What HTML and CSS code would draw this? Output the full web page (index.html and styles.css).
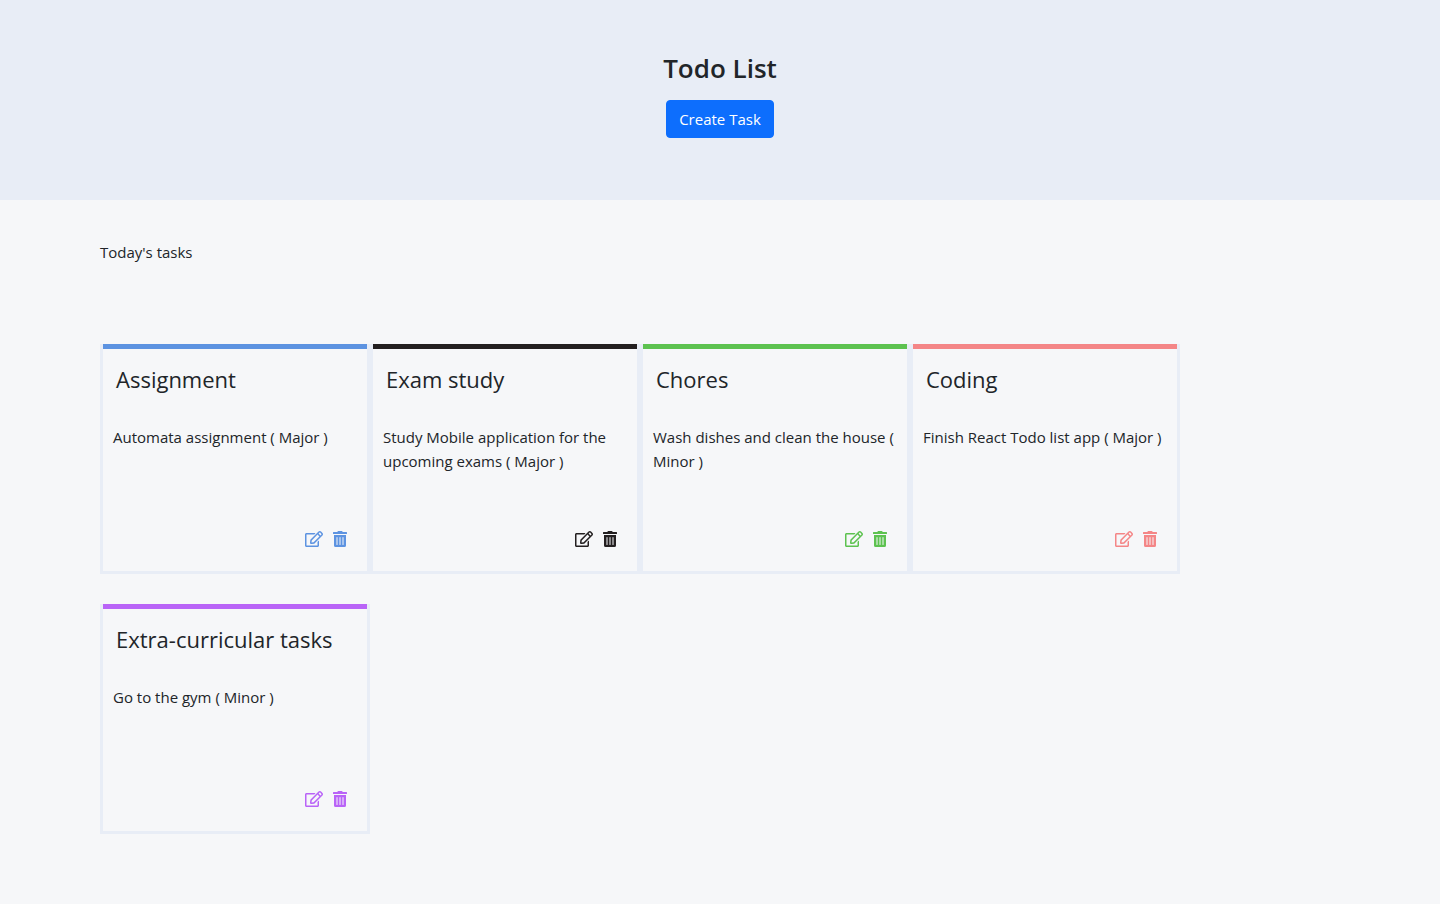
FILE: index.html
```
<!DOCTYPE html>
<html lang="en">
<head>
<meta charset="utf-8">
<meta name="viewport" content="width=device-width, initial-scale=1">
<title>Todo List</title>
<link rel="stylesheet" href="styles.css">
</head>
<body>
<svg class="sprite" aria-hidden="true">
  <symbol id="edit" viewBox="0 0 576 512"><path d="M402.3 344.9l32-32c5-5 13.7-1.5 13.7 5.7V464c0 26.5-21.5 48-48 48H48c-26.5 0-48-21.5-48-48V112c0-26.5 21.5-48 48-48h273.5c7.1 0 10.7 8.6 5.7 13.7l-32 32c-1.5 1.5-3.5 2.3-5.7 2.3H48v352h352V350.5c0-2.1.8-4.1 2.3-5.6zm156.6-201.8L296.3 405.7l-90.4 10c-26.2 2.9-48.5-19.2-45.6-45.6l10-90.4L432.9 17.1c22.9-22.9 59.9-22.9 82.7 0l43.2 43.2c22.9 22.9 22.9 60 .1 82.8zM460.1 174L402 115.9 216.2 301.8l-7.3 65.3 65.3-7.3L460.1 174zm64.8-79.7l-43.2-43.2c-4.1-4.1-10.8-4.1-14.8 0L436 82l58.1 58.1 30.9-30.9c4-4.2 4-10.8-.1-14.9z"/></symbol>
  <symbol id="trash" viewBox="0 0 448 512"><path d="M32 464a48 48 0 0 0 48 48h288a48 48 0 0 0 48-48V128H32zm272-256a16 16 0 0 1 32 0v224a16 16 0 0 1-32 0zm-96 0a16 16 0 0 1 32 0v224a16 16 0 0 1-32 0zm-96 0a16 16 0 0 1 32 0v224a16 16 0 0 1-32 0zM432 32H312l-9.4-18.7A24 24 0 0 0 281.1 0H166.8a23.7 23.7 0 0 0-21.4 13.3L136 32H16A16 16 0 0 0 0 48v32a16 16 0 0 0 16 16h416a16 16 0 0 0 16-16V48a16 16 0 0 0-16-16z"/></symbol>
</svg>
<header class="header">
  <h1 class="title">Todo List</h1>
  <button class="create" type="button">Create Task</button>
</header>
<main class="main">
  <p class="today">Today's tasks</p>
  <div class="tasks">
    <article class="card blue">
      <h2 class="name">Assignment</h2>
      <p class="text">Automata assignment ( Major )</p>
      <div class="actions">
        <button class="action" type="button" aria-label="Edit"><svg class="edit"><use href="#edit"/></svg></button>
        <button class="action" type="button" aria-label="Delete"><svg class="trash"><use href="#trash"/></svg></button>
      </div>
    </article>
    <article class="card black">
      <h2 class="name">Exam study</h2>
      <p class="text">Study Mobile application for the upcoming exams ( Major )</p>
      <div class="actions">
        <button class="action" type="button" aria-label="Edit"><svg class="edit"><use href="#edit"/></svg></button>
        <button class="action" type="button" aria-label="Delete"><svg class="trash"><use href="#trash"/></svg></button>
      </div>
    </article>
    <article class="card green">
      <h2 class="name">Chores</h2>
      <p class="text">Wash dishes and clean the house ( Minor )</p>
      <div class="actions">
        <button class="action" type="button" aria-label="Edit"><svg class="edit"><use href="#edit"/></svg></button>
        <button class="action" type="button" aria-label="Delete"><svg class="trash"><use href="#trash"/></svg></button>
      </div>
    </article>
    <article class="card red">
      <h2 class="name">Coding</h2>
      <p class="text">Finish React Todo list app ( Major )</p>
      <div class="actions">
        <button class="action" type="button" aria-label="Edit"><svg class="edit"><use href="#edit"/></svg></button>
        <button class="action" type="button" aria-label="Delete"><svg class="trash"><use href="#trash"/></svg></button>
      </div>
    </article>
    <article class="card purple">
      <h2 class="name">Extra-curricular tasks</h2>
      <p class="text">Go to the gym ( Minor )</p>
      <div class="actions">
        <button class="action" type="button" aria-label="Edit"><svg class="edit"><use href="#edit"/></svg></button>
        <button class="action" type="button" aria-label="Delete"><svg class="trash"><use href="#trash"/></svg></button>
      </div>
    </article>
  </div>
</main>
</body>
</html>
```
FILE: styles.css
```
* { box-sizing: border-box; }
body {
  margin: 0;
  background: #f6f7f9;
  color: #212529;
  font: 15px/24px "Segoe UI", "Open Sans", "Noto Sans", sans-serif;
}
h1, h2, p { margin: 0; }
.sprite { display: none; }
.header {
  display: flex;
  flex-direction: column;
  align-items: center;
  gap: 14px;
  min-height: 200px;
  padding: 50px 16px;
  background: #e8edf6;
}
.title { font-size: 26px; line-height: 36px; font-weight: 600; }
.create {
  padding: 6px 12px;
  border: 1px solid #0d6efd;
  border-radius: 4px;
  background: #0d6efd;
  color: #fff;
  font: inherit;
}
.main { padding: 40px 100px; }
.today { margin-bottom: 80px; }
.tasks { display: flex; flex-wrap: wrap; row-gap: 30px; }
.card {
  display: flex;
  flex-direction: column;
  width: 270px;
  min-height: 230px;
  border: solid #e8edf6;
  border-width: 0 3px 3px;
}
.card::before { content: ""; height: 5px; background: currentColor; }
.blue { color: #5d93e1; }
.black { color: #231f20; }
.green { color: #5dc250; }
.red { color: #f48687; }
.purple { color: #b964f7; }
.name {
  padding: 16px 13px 0;
  color: #212529;
  font-size: 22px;
  line-height: 28px;
  font-weight: 400;
}
.text { padding: 32px 8px 0 10px; color: #212529; }
.actions {
  display: flex;
  justify-content: flex-end;
  gap: 10px;
  margin-top: auto;
  padding: 0 20px 24px;
}
.action { display: flex; padding: 0; border: 0; background: none; color: inherit; }
.edit, .trash { height: 16px; fill: currentColor; }
.edit { width: 18px; }
.trash { width: 14px; }
```
